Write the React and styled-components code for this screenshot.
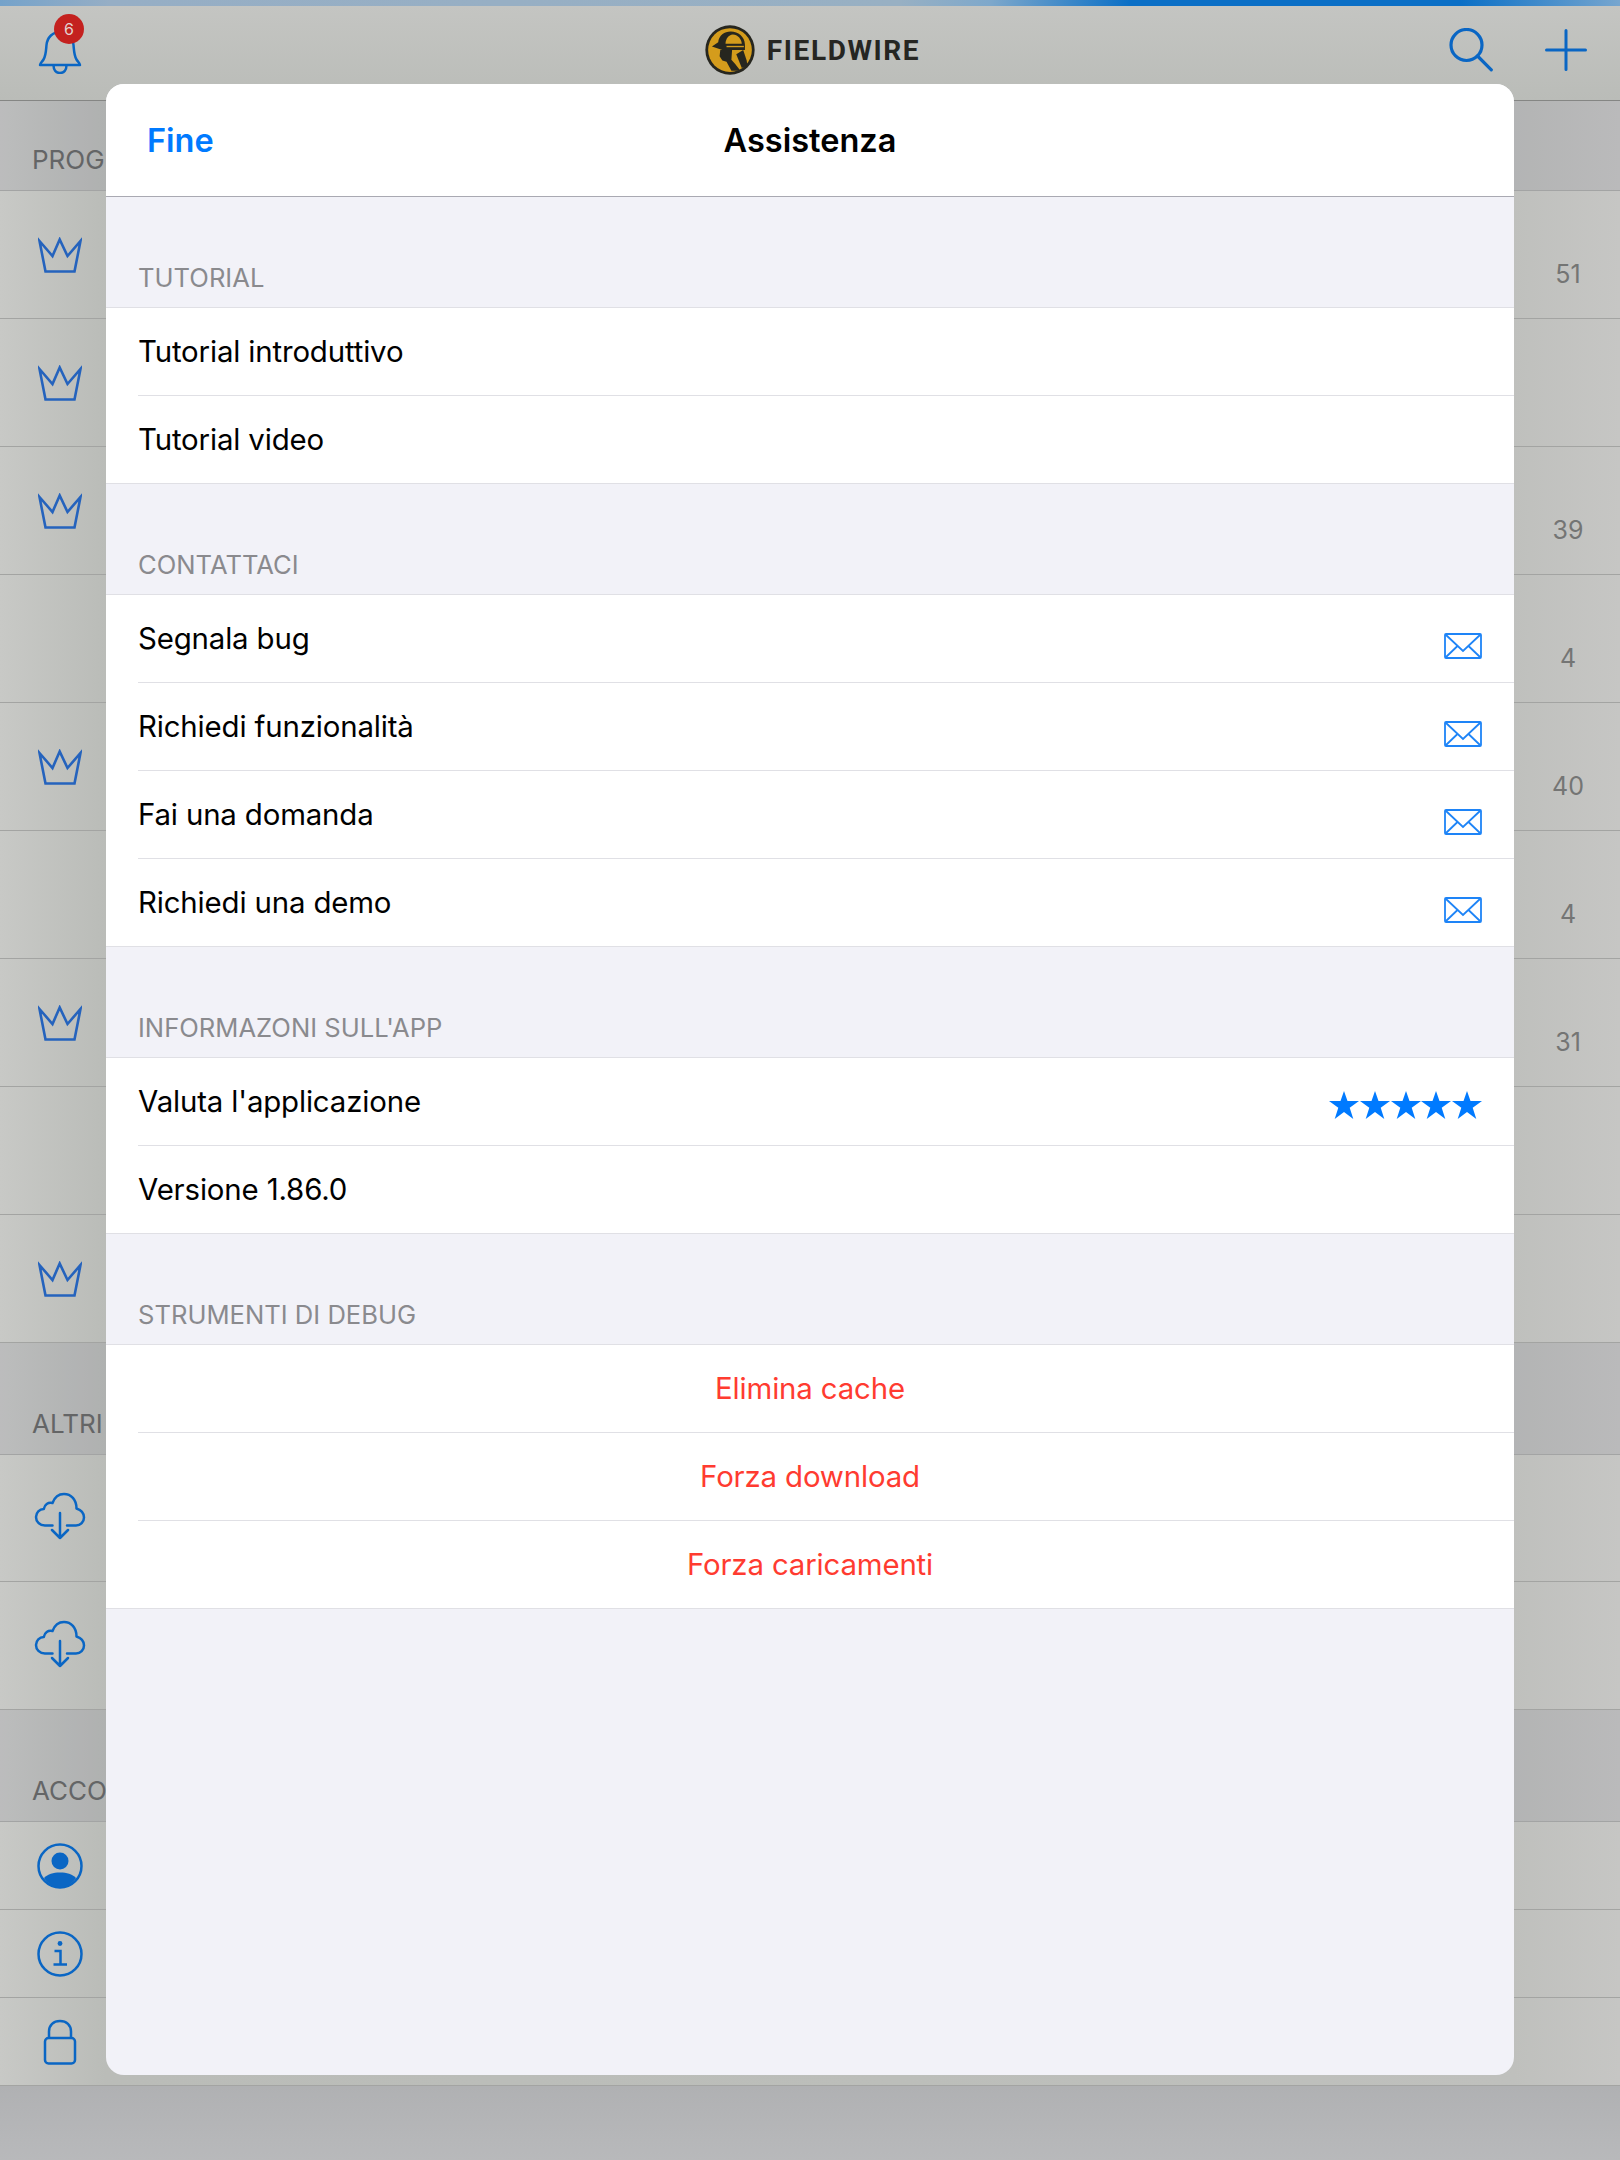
import React from 'react';
import styled, { createGlobalStyle } from 'styled-components';

const GlobalStyle = createGlobalStyle`
  html, body {
    margin: 0;
    padding: 0;
    background: #b5b6b8;
  }
`;

const Page = styled.div`
  position: relative;
  width: 1620px;
  height: 2160px;
  overflow: hidden;
  display: flex;
  flex-direction: column;
  font-family: Inter, "Liberation Sans", sans-serif;
  background: linear-gradient(90deg, #c8c9c6 0, #babcb8 105px, #bcbeba 900px, #bfc0bd 1514px, #c6c6c4 1620px);
`;

const ProgressStrip = styled.div`
  height: 6px;
  flex: none;
  background: linear-gradient(90deg, #74a2ca 0, #96aec5 110px, #98b0c3 900px, #7ea8cb 990px, #0a6fc6 1130px, #0a6fc6 1460px, #77a6cf 1620px);
`;

const TopBar = styled.header`
  height: 95px;
  flex: none;
  box-sizing: border-box;
  border-bottom: 1px solid #858684;
  display: grid;
  grid-template-columns: 1fr auto 1fr;
  align-items: center;
  padding: 0 33px 6px 38px;
  background: linear-gradient(180deg, #c4c5c2, #babcb8);
`;

const BellWrap = styled.div`
  position: relative;
  width: 44px;
  height: 44px;
  top: 2px;
`;

const Badge = styled.span`
  position: absolute;
  left: 16px;
  top: -16px;
  width: 30px;
  height: 30px;
  border-radius: 50%;
  background: #c4211f;
  color: #e2d2d0;
  font-size: 16px;
  line-height: 30px;
  text-align: center;
`;

const Brand = styled.div`
  display: flex;
  align-items: center;
  gap: 12px;
  color: #262622;
  font-family: Roboto, sans-serif;
  font-size: 28px;
  font-weight: 700;
  letter-spacing: 1.6px;
`;

const BarActions = styled.div`
  display: flex;
  align-items: center;
  justify-content: flex-end;
  gap: 52px;
`;

const SectionBar = styled.div`
  height: ${({ $h }) => $h}px;
  flex: none;
  box-sizing: border-box;
  display: flex;
  align-items: flex-end;
  padding: 0 0 14px 32px;
  background: rgba(70, 70, 95, 0.09);
  border-bottom: 1px solid #a3a4a4;
  color: #646566;
  font-size: 26px;
  line-height: 32px;
`;

const ListRow = styled.div`
  height: ${({ $h }) => $h}px;
  flex: none;
  box-sizing: border-box;
  display: flex;
  align-items: center;
  border-bottom: 1px solid #a3a4a2;
`;

const IconSlot = styled.div`
  width: 120px;
  display: flex;
  justify-content: center;
  flex: none;
  padding-bottom: ${({ $lift }) => $lift || 0}px;
`;

const Count = styled.span`
  margin-left: auto;
  margin-right: 27px;
  width: 50px;
  text-align: center;
  padding-top: 38px;
  font-size: 25px;
  color: #747574;
`;

const PageFoot = styled.div`
  flex: 1;
  background: linear-gradient(180deg, #b0b1b3, #b8b9bb);
`;

const Sheet = styled.section`
  position: absolute;
  left: 106px;
  top: 84px;
  width: 1408px;
  height: 1991px;
  border-radius: 18px;
  overflow: hidden;
  background: #f2f2f8;
`;

const SheetHeader = styled.div`
  position: relative;
  height: 113px;
  box-sizing: border-box;
  padding-top: 2px;
  background: #fff;
  border-bottom: 1px solid #a9a9b2;
  display: flex;
  align-items: center;
  justify-content: center;
`;

const DoneLink = styled.span`
  position: absolute;
  left: 41px;
  top: 35px;
  font-size: 32.5px;
  font-weight: 600;
  line-height: 44px;
  color: #007aff;
`;

const SheetTitle = styled.h1`
  margin: 0;
  font-size: 32.5px;
  font-weight: 600;
  line-height: 44px;
  color: #000;
`;

const GroupLabel = styled.div`
  height: 111px;
  box-sizing: border-box;
  display: flex;
  align-items: flex-end;
  padding: 0 0 13px 32px;
  font-size: 25.6px;
  line-height: 32px;
  color: #8a8a8e;
  border-bottom: 1px solid #e0e0e5;
`;

const Group = styled.div`
  background: #fff;
  border-bottom: 1px solid #e0e0e5;
`;

const Cell = styled.div`
  height: 88px;
  margin-left: 32px;
  padding-right: 32px;
  box-sizing: border-box;
  display: flex;
  align-items: center;
  justify-content: ${({ $danger }) => ($danger ? 'center' : 'space-between')};
  border-bottom: 1px solid #e0e0e5;
  font-size: 29.4px;
  letter-spacing: -0.15px;
  color: ${({ $danger }) => ($danger ? '#ff3b30' : '#000')};
  &:last-child {
    height: 87px;
    border-bottom: none;
  }
`;

const CellIcon = styled.div`
  display: flex;
  gap: 0.7px;
  padding-top: ${({ $drop }) => $drop}px;
`;

const BLUE = '#0a66c4';
const CROWN = '#2563bd';

const Logo = () => (
  <svg width="50" height="50" viewBox="28 28 144 144">
    <circle cx="100" cy="100" r="71" fill="#26261f" />
    <circle cx="100" cy="100" r="63" fill="#d49c1c" />
    <path d="M48 90 L66 78 C68 58 84 47 102 47 C124 47 142 62 143 84 L143 100 L78 100 Z" fill="#26261f" />
    <path d="M87 82 C87 68 96 56 108 55 C122 55 133 68 134 82 Z" fill="#d49c1c" />
    <path d="M90 90 H140" stroke="#d49c1c" strokeWidth="4" />
    <path d="M72 100 L70 118 L78 130 L90 134 L104 160 L130 160 L115 140 L104 128 L106 100 Z" fill="#26261f" />
    <path d="M118 112 L138 100 L148 130 L150 145 L134 152 Z" fill="#26261f" />
  </svg>
);

const Bell = () => (
  <svg width="44" height="44" viewBox="0 0 44 44" fill="none" stroke={BLUE} strokeWidth="2.5" strokeLinejoin="round">
    <path d="M2 35 C2 33.500 4 32 5.500 29.500 C8 25.500 8 20 8.500 15 C9.300 7 15 2 22 2 C29 2 34.700 7 35.500 15 C36 20 36 25.500 38.500 29.500 C40 32 42 33.500 42 35 Z" />
    <path d="M15.500 35 C15.500 40 18 43 22 43 C26 43 28.500 40 28.500 35" />
  </svg>
);

const SearchIcon = () => (
  <svg width="44" height="44" viewBox="0 0 44 44" fill="none" stroke={BLUE} strokeWidth="3.2" strokeLinecap="round">
    <circle cx="17.500" cy="17" r="15.500" />
    <path d="M28.500 28 L42.300 41.800" />
  </svg>
);

const PlusIcon = () => (
  <svg width="42" height="42" viewBox="0 0 42 42" fill="none" stroke={BLUE} strokeWidth="3" strokeLinecap="round">
    <path d="M21 1.500 V40.500 M1.500 21 H40.500" />
  </svg>
);

const Crown = () => (
  <svg width="44" height="36" viewBox="0 0 44 36" fill="none" stroke={CROWN} strokeWidth="2.600">
    <path d="M1.500 4 L14.500 19 L21.700 2.500 L29.500 19 L42.500 4 L36.500 34.500 H7.500 Z" />
  </svg>
);

const CloudDown = () => (
  <svg width="52" height="48" viewBox="0 0 52 48" fill="none" stroke={BLUE} strokeWidth="2.500" strokeLinecap="round" strokeLinejoin="round">
    <path d="M18.500 33.500 H11 C5.500 33.500 2 29.500 2 25 C2 20.500 5.500 17 9.800 17 C10.500 12.500 14 10 18.500 11 C20.500 5.500 25 2 30 2 C37 2 42.500 7.500 42.500 16.500 C47 18 50 21 50 25.500 C50 30 46.500 33.500 42 33.500 H33" />
    <path d="M26 21 V46 M18 38 L26 46 L34 38" />
  </svg>
);

const Person = () => (
  <svg width="46" height="46" viewBox="0 0 46 46">
    <circle cx="23" cy="23" r="21.500" fill="none" stroke={BLUE} strokeWidth="2.500" />
    <circle cx="23" cy="18" r="8.500" fill={BLUE} />
    <path d="M7 35 C11 31 16 29.500 23 29.500 C30 29.500 35 31 39 35 C35 41 29 44.500 23 44.500 C17 44.500 11 41 7 35 Z" fill={BLUE} />
  </svg>
);

const InfoIcon = () => (
  <svg width="46" height="46" viewBox="0 0 46 46" fill="none" stroke={BLUE} strokeWidth="2.500">
    <circle cx="23" cy="23" r="21.500" />
    <circle cx="23" cy="12.500" r="2.400" fill={BLUE} stroke="none" />
    <path d="M17.500 20 H23.500 V33 M16.500 33.500 H30" />
  </svg>
);

const Lock = () => (
  <svg width="34" height="46" viewBox="0 0 34 46" fill="none" stroke={BLUE} strokeWidth="2.500">
    <rect x="2" y="19" width="30" height="25.500" rx="3.500" />
    <path d="M6 19 V12.500 C6 6 10.500 2 17 2 C23.500 2 28 6 28 12.500 V19" />
  </svg>
);

const Envelope = () => (
  <svg width="38" height="26" viewBox="0 0 38 26" fill="none" stroke="#1e84f7" strokeWidth="1.800">
    <rect x="1" y="1" width="36" height="24" rx="1" />
    <path d="M1.500 1.500 L19 18 L36.500 1.500 M1.500 24.500 L13.500 13 M36.500 24.500 L24.500 13" />
  </svg>
);

const Star = () => (
  <svg width="30" height="28" viewBox="0 0 30 28">
    <path d="M15 0 L18.500 10 H30 L20.700 16.800 L24.300 28 L15 21 L5.700 28 L9.300 16.800 L0 10 H11.500 Z" fill="#007aff" />
  </svg>
);

const projects = [
  { crown: true, count: '51' },
  { crown: true },
  { crown: true, count: '39' },
  { count: '4' },
  { crown: true, count: '40' },
  { count: '4' },
  { crown: true, count: '31' },
  {},
  { crown: true },
];

const accountIcons = [Person, InfoIcon, Lock];

const helpGroups = [
  {
    label: 'TUTORIAL',
    cells: [{ text: 'Tutorial introduttivo' }, { text: 'Tutorial video' }],
  },
  {
    label: 'CONTATTACI',
    cells: [
      { text: 'Segnala bug', mail: true },
      { text: 'Richiedi funzionalità', mail: true },
      { text: 'Fai una domanda', mail: true },
      { text: 'Richiedi una demo', mail: true },
    ],
  },
  {
    label: "INFORMAZONI SULL'APP",
    cells: [{ text: "Valuta l'applicazione", stars: true }, { text: 'Versione 1.86.0' }],
  },
  {
    label: 'STRUMENTI DI DEBUG',
    cells: [
      { text: 'Elimina cache', danger: true },
      { text: 'Forza download', danger: true },
      { text: 'Forza caricamenti', danger: true },
    ],
  },
];

const App = () => (
  <Page>
    <GlobalStyle />
    <ProgressStrip />
    <TopBar>
      <BellWrap>
        <Bell />
        <Badge>6</Badge>
      </BellWrap>
      <Brand>
        <Logo />
        FIELDWIRE
      </Brand>
      <BarActions>
        <SearchIcon />
        <PlusIcon />
      </BarActions>
    </TopBar>

    <SectionBar $h={90}>PROG</SectionBar>
    {projects.map((p, i) => (
      <ListRow key={i} $h={128}>
        <IconSlot>{p.crown && <Crown />}</IconSlot>
        {p.count && <Count>{p.count}</Count>}
      </ListRow>
    ))}

    <SectionBar $h={112}>ALTRI</SectionBar>
    <ListRow $h={127}>
      <IconSlot $lift={4}>
        <CloudDown />
      </IconSlot>
    </ListRow>
    <ListRow $h={128}>
      <IconSlot $lift={4}>
        <CloudDown />
      </IconSlot>
    </ListRow>

    <SectionBar $h={112}>ACCO</SectionBar>
    {accountIcons.map((Icon, i) => (
      <ListRow key={i} $h={88}>
        <IconSlot>
          <Icon />
        </IconSlot>
      </ListRow>
    ))}
    <PageFoot />

    <Sheet>
      <SheetHeader>
        <DoneLink>Fine</DoneLink>
        <SheetTitle>Assistenza</SheetTitle>
      </SheetHeader>
      {helpGroups.map((group) => (
        <React.Fragment key={group.label}>
          <GroupLabel>{group.label}</GroupLabel>
          <Group>
            {group.cells.map((cell) => (
              <Cell key={cell.text} $danger={cell.danger}>
                {cell.text}
                {cell.mail && (
                  <CellIcon $drop={14}>
                    <Envelope />
                  </CellIcon>
                )}
                {cell.stars && (
                  <CellIcon $drop={6}>
                    {[0, 1, 2, 3, 4].map((n) => (
                      <Star key={n} />
                    ))}
                  </CellIcon>
                )}
              </Cell>
            ))}
          </Group>
        </React.Fragment>
      ))}
    </Sheet>
  </Page>
);

export default App;
